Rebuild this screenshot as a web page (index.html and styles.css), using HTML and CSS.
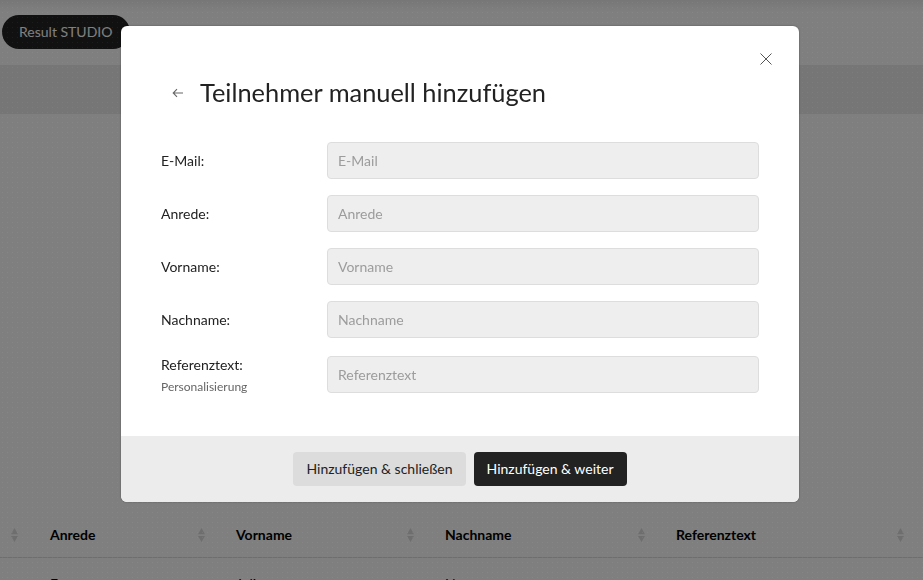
FILE: index.html
```html
<!DOCTYPE html>
<html lang="de">
<head>
<meta charset="utf-8">
<title>Teilnehmer manuell hinzufügen</title>
<link rel="stylesheet" href="styles.css">
</head>
<body>
<div class="page">
  <header class="topbar"><div class="brand">Result STUDIO</div></header>
  <div class="band"></div>
  <div class="table-wrap">
    <div class="thead">
      <svg class="sort" viewBox="0 0 8 16"><path d="M4 0 8 7H0Z M0 9H8L4 16Z"/></svg>
      <div class="th">Anrede<svg class="sort" viewBox="0 0 8 16"><path d="M4 0 8 7H0Z M0 9H8L4 16Z"/></svg></div>
      <div class="th">Vorname<svg class="sort" viewBox="0 0 8 16"><path d="M4 0 8 7H0Z M0 9H8L4 16Z"/></svg></div>
      <div class="th">Nachname<svg class="sort" viewBox="0 0 8 16"><path d="M4 0 8 7H0Z M0 9H8L4 16Z"/></svg></div>
      <div class="th">Referenztext<svg class="sort" viewBox="0 0 8 16"><path d="M4 0 8 7H0Z M0 9H8L4 16Z"/></svg></div>
    </div>
    <div class="trow">
      <div></div>
      <div>Frau</div>
      <div>Julia</div>
      <div>Neumann</div>
      <div></div>
    </div>
  </div>
</div>
<div class="overlay"></div>
<section class="modal">
  <div class="modal-body">
    <button class="close" aria-label="Schließen">
      <svg viewBox="0 0 12 12" width="12" height="12"><path d="M.5.5l11 11M11.5.5l-11 11"/></svg>
    </button>
    <div class="title-row">
      <svg class="back" viewBox="0 0 12 10" width="12" height="10"><path d="M11 5H1.5M5 1.2 1.2 5 5 8.8"/></svg>
      <h1>Teilnehmer manuell hinzufügen</h1>
    </div>
    <form class="form">
      <label class="row"><span class="label">E-Mail:</span><input placeholder="E-Mail"></label>
      <label class="row"><span class="label">Anrede:</span><input placeholder="Anrede"></label>
      <label class="row"><span class="label">Vorname:</span><input placeholder="Vorname"></label>
      <label class="row"><span class="label">Nachname:</span><input placeholder="Nachname"></label>
      <label class="row row-tall"><span class="label">Referenztext:<small>Personalisierung</small></span><input placeholder="Referenztext"></label>
    </form>
  </div>
  <footer class="modal-foot">
    <button class="btn btn-light">Hinzufügen &amp; schließen</button>
    <button class="btn btn-dark">Hinzufügen &amp; weiter</button>
  </footer>
</section>
</body>
</html>
```
FILE: styles.css
```css
* { box-sizing: border-box; }
html, body { margin: 0; height: 100%; overflow: hidden; }
body { font-family: Lato, "Liberation Sans", sans-serif; background: #fff; color: #000; }
.page { height: 580px; display: flex; flex-direction: column; overflow: hidden; }
.topbar { flex: none; height: 65px; padding: 15px 0 0 2px; background: linear-gradient(#eee, #fff 12px); }
.brand {
  width: 128px; height: 34px; border-radius: 17px; background: #222; color: #fff;
  font-size: 14px; line-height: 34px; padding-left: 17px;
}
.band { flex: none; height: 49px; background: #ececec; }
.table-wrap { flex: none; margin-top: 398px; }
.thead, .trow {
  display: grid; grid-template-columns: 39px 186px 209px 231px 1fr; padding-left: 11px;
}
.thead {
  height: 46px; align-items: center; border-bottom: 1px solid #ddd;
  font-size: 14px; font-weight: 700;
}
.th { display: flex; justify-content: space-between; align-items: center; padding-right: 31px; }
.th:last-child { padding-right: 19px; }
.sort { width: 7px; height: 14px; fill: #ddd; flex: none; }
.trow { font-size: 14px; padding-top: 17px; }
.overlay {
  position: fixed; inset: 0; background-color: rgba(0, 0, 0, .5);
  background-image: radial-gradient(rgba(255, 255, 255, .05) .5px, transparent .9px);
  background-size: 5px 5px;
}
.modal {
  position: absolute; left: 121px; top: 26px; width: 678px; height: 476px;
  background: #fff; border-radius: 6px; display: flex; flex-direction: column; overflow: hidden;
  box-shadow: 0 0 2px rgba(0, 0, 0, .35);
}
.modal-body { flex: 1; position: relative; padding: 50px 40px 0; }
.close {
  position: absolute; top: 27px; right: 27px; width: 12px; height: 12px; padding: 0;
  border: 0; background: none; display: flex;
}
.close svg { stroke: #555; stroke-width: 1; fill: none; }
.title-row { display: flex; align-items: center; height: 33px; margin-left: 11px; }
.back { stroke: #666; stroke-width: 1.1; fill: none; margin-right: 16px; }
h1 { margin: 0; font-size: 25.4px; font-weight: 400; color: #222; line-height: 33px; }
.form { margin-top: 33px; display: flex; flex-direction: column; gap: 16px; }
.row { display: grid; grid-template-columns: 166px 432px; align-items: center; height: 37px; }
.row-tall { margin-top: 2px; }
.label { font-size: 14px; color: #222; }
.label small { display: block; font-size: 12px; line-height: 14px; color: #666; margin-top: 7px; margin-bottom: -1px; }
.row-tall .label { margin-top: -1px; }
input {
  height: 37px; width: 432px; border: 1px solid #ddd; border-radius: 4px; background: #eee;
  padding: 0 10px; font: 14px Lato, "Liberation Sans", sans-serif; color: #222;
}
input::placeholder { color: #9c9c9c; opacity: 1; }
.modal-foot {
  flex: none; height: 66px; background: #ececec; display: flex; justify-content: center; gap: 8px; padding-top: 16px;
}
.btn {
  height: 34px; border: 0; border-radius: 4px; padding: 0 13px 2px;
  font: 14px Lato, "Liberation Sans", sans-serif;
}
.btn-light { background: #dcdcdc; color: #222; }
.btn-dark { background: #222; color: #fff; }
```
